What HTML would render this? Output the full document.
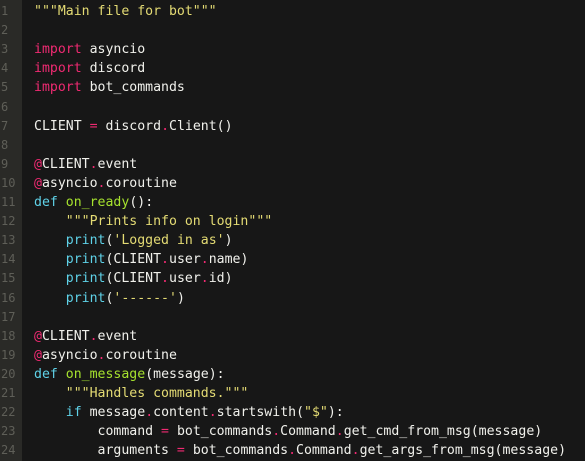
<!DOCTYPE html><html><head><style>
body{margin:0;width:585px;height:461px;overflow:hidden;background:#171717;font-family:"DejaVu Sans Mono","Liberation Mono",monospace;font-size:13.2px;}
.g{position:absolute;left:0;top:0;width:22px;height:461px;background:#2a2a27;}
.l{position:absolute;left:0;height:19.1px;line-height:19.1px;white-space:pre;color:#f1f1ec;}
.n{display:inline-block;width:20px;color:#5f5f58;padding-left:1px;font-size:12px;}
.c{position:absolute;left:34px;top:0}
.k{color:#f02a72}.s{color:#e4db74}.f{color:#a6e22e}.d{color:#5fd2e8}.o{color:#f02a72}
</style></head><body><div class="g"></div>
<div class="l" style="top:2px"><span class="n">1</span><span class="c"><span class="s">"""Main file for bot"""</span></span></div>
<div class="l" style="top:21.1px"><span class="n">2</span></div>
<div class="l" style="top:40.2px"><span class="n">3</span><span class="c"><span class="k">import</span> asyncio</span></div>
<div class="l" style="top:59.3px"><span class="n">4</span><span class="c"><span class="k">import</span> discord</span></div>
<div class="l" style="top:78.4px"><span class="n">5</span><span class="c"><span class="k">import</span> bot_commands</span></div>
<div class="l" style="top:97.5px"><span class="n">6</span></div>
<div class="l" style="top:116.6px"><span class="n">7</span><span class="c">CLIENT <span class="o">=</span> discord<span class="o">.</span>Client()</span></div>
<div class="l" style="top:135.7px"><span class="n">8</span></div>
<div class="l" style="top:154.8px"><span class="n">9</span><span class="c"><span class="o">@</span>CLIENT<span class="o">.</span>event</span></div>
<div class="l" style="top:173.9px"><span class="n">10</span><span class="c"><span class="o">@</span>asyncio<span class="o">.</span>coroutine</span></div>
<div class="l" style="top:193px"><span class="n">11</span><span class="c"><span class="d">def</span> <span class="f">on_ready</span>():</span></div>
<div class="l" style="top:212.1px"><span class="n">12</span><span class="c">    <span class="s">"""Prints info on login"""</span></span></div>
<div class="l" style="top:231.2px"><span class="n">13</span><span class="c">    <span class="d">print</span>(<span class="s">'Logged in as'</span>)</span></div>
<div class="l" style="top:250.3px"><span class="n">14</span><span class="c">    <span class="d">print</span>(CLIENT<span class="o">.</span>user<span class="o">.</span>name)</span></div>
<div class="l" style="top:269.4px"><span class="n">15</span><span class="c">    <span class="d">print</span>(CLIENT<span class="o">.</span>user<span class="o">.</span>id)</span></div>
<div class="l" style="top:288.5px"><span class="n">16</span><span class="c">    <span class="d">print</span>(<span class="s">'------'</span>)</span></div>
<div class="l" style="top:307.6px"><span class="n">17</span></div>
<div class="l" style="top:326.7px"><span class="n">18</span><span class="c"><span class="o">@</span>CLIENT<span class="o">.</span>event</span></div>
<div class="l" style="top:345.8px"><span class="n">19</span><span class="c"><span class="o">@</span>asyncio<span class="o">.</span>coroutine</span></div>
<div class="l" style="top:364.9px"><span class="n">20</span><span class="c"><span class="d">def</span> <span class="f">on_message</span>(message):</span></div>
<div class="l" style="top:384px"><span class="n">21</span><span class="c">    <span class="s">"""Handles commands."""</span></span></div>
<div class="l" style="top:403.1px"><span class="n">22</span><span class="c">    <span class="d">if</span> message<span class="o">.</span>content<span class="o">.</span>startswith(<span class="s">"$"</span>):</span></div>
<div class="l" style="top:422.2px"><span class="n">23</span><span class="c">        command <span class="o">=</span> bot_commands<span class="o">.</span>Command<span class="o">.</span>get_cmd_from_msg(message)</span></div>
<div class="l" style="top:441.3px"><span class="n">24</span><span class="c">        arguments <span class="o">=</span> bot_commands<span class="o">.</span>Command<span class="o">.</span>get_args_from_msg(message)</span></div>
</body></html>
